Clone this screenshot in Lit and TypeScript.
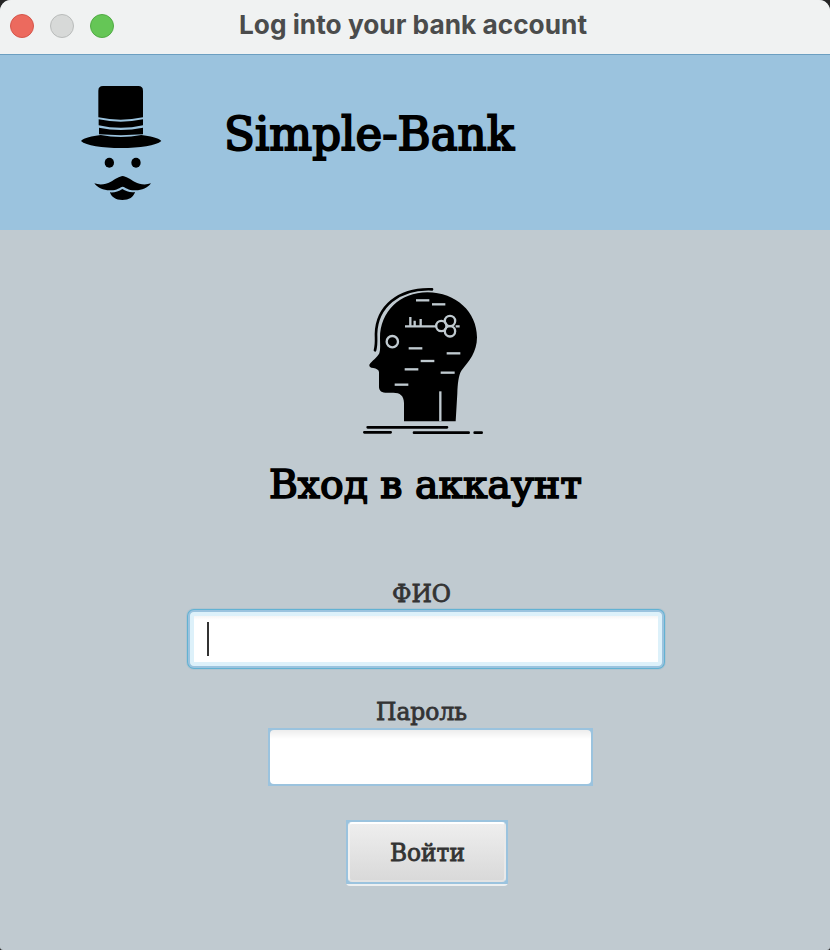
import { LitElement, html, css, svg } from "lit";
import { customElement } from "lit/decorators.js";

/** A single line of text fitted to a given width. */
const line = (text: string, cls: string, width: number, height: number, baseline: number) => html`
  <svg class="line ${cls}" width=${width} height=${height} viewBox="0 0 ${width} ${height}">
    <text x="0" y=${baseline} textLength=${width} lengthAdjust="spacingAndGlyphs">${text}</text>
  </svg>`;

const gentleman = html`
  <svg class="logo" width="120" height="140" viewBox="0 0 360 420">
    <path d="M115 62Q115 48 129 48H235Q249 48 249 62V142Q182 156 115 142Z" />
    <path d="M116 148Q182 162 249 148V166Q182 181 116 166Z" />
    <path d="M117 173Q182 187 249 173V193Q182 198 117 193Z" />
    <path d="M63 213C72 203 96 199 122 195Q182 207 244 195C270 199 295 203 304 213C288 227 240 234 183 234S78 227 63 213Z" />
    <ellipse cx="148" cy="278" rx="14" ry="15" />
    <ellipse cx="228" cy="278" rx="14" ry="15" />
    <path d="M103 340C120 346 138 343 151 336C167 327 178 319 188 318C198 319 209 327 225 336C238 343 256 346 273 340C262 355 244 362 223 361C205 361 196 352 188 350C180 352 171 361 153 361C132 362 114 355 103 340Z" />
    <path d="M150 367C164 368 176 364 187 357C198 364 210 368 225 366C221 381 207 390 187 390S154 381 150 367Z" />
  </svg>`;

const dashes = [
  [198, 76, 238], [246, 88, 286], [176, 220, 217], [290, 235, 331], [212, 258, 253],
  [164, 283, 205], [272, 293, 314], [134, 329, 175],
];

const head = html`
  <svg class="head" width="150" height="170" viewBox="0 0 450 510">
    <path d="M162 439V384C162 362 150 353 130 353H106C91 353 86 344 87 330V292C87 284 79 281 70 279C61 278 57 274 58 269C65 259 82 247 88 235C92 222 90 207 90 190C90 110 150 52 232 52C319 52 381 112 381 187C381 231 357 259 335 286C325 300 323 330 322 355L317 439Z" />
    <path class="outline" d="M75 226C80 207 78 192 78 177C80 96 145 39 246 43" />
    <g class="detail">
      ${dashes.map(([x1, y, x2]) => svg`<path d="M${x1} ${y}H${x2}" />`)}
      <circle cx="127" cy="200" r="17" />
      <path d="M165 154H258M317 154H329M181 152V126M194 152V137M212 152V132" />
      <circle cx="274" cy="153" r="15.5" />
      <circle cx="300" cy="138" r="15.5" />
      <circle cx="300" cy="169" r="15.5" />
      <path d="M271 349V439" />
    </g>
    <path class="ground" d="M53 457H291M43 472H122M192 473H356M374 473H395" />
  </svg>`;

@customElement("app-root")
export class AppRoot extends LitElement {
  static styles = css`
    :host { display: block; background: #252525; }
    .window {
      width: 830px; height: 950px; box-sizing: border-box; overflow: hidden;
      border-radius: 11px 11px 3px 3px; background: #c0cad0;
      display: flex; flex-direction: column;
    }
    svg { display: block; flex: none; }
    .line { overflow: visible; font-family: "DejaVu Serif", serif; fill: #333; }
    .titlebar {
      height: 55px; box-sizing: border-box; flex: none; background: #f0f2f2;
      border-bottom: 1px solid #6c9fc1; display: flex; padding-left: 10px;
    }
    .lights { display: flex; gap: 16px; padding-top: 14px; width: 228.5px; }
    .light { width: 24px; height: 24px; box-sizing: border-box; border-radius: 50%; border: 1px solid; }
    .close { background: #ec6a5e; border-color: #d5564b; }
    .minimize { background: #d7d9d8; border-color: #b9bcbb; }
    .zoom { background: #65c656; border-color: #51ab45; }
    .title { font: bold 26px Inter, sans-serif; fill: #4b4c4c; }
    .banner { height: 175px; flex: none; background: #9bc3de; display: flex; }
    .logo { margin: 15px 44px 0 60px; }
    .brand { font-size: 47px; fill: #000; stroke: #000; stroke-width: 2px; }
    .login { display: flex; flex-direction: column; align-items: flex-start; padding-top: 45px; }
    .head { margin-left: 350px; }
    .outline { fill: none; stroke: #000; stroke-width: 8; stroke-linecap: round; }
    .ground { fill: none; stroke: #000; stroke-width: 8; stroke-linecap: round; }
    .detail { fill: none; stroke: #c0cad0; stroke-width: 7; }
    .heading { font-size: 40px; fill: #000; stroke: #000; stroke-width: 1.7px; margin: 10px 0 0 269px; }
    .small { font-size: 23.5px; stroke: #333; stroke-width: .8px; }
    .name-label { margin: 55px 0 0 392px; }
    .name-field {
      width: 472px; height: 54px; box-sizing: border-box; margin: 2px 0 0 190px;
      border: 4px solid #ddf1fa; border-radius: 4px; padding: 6px 13px;
      background: linear-gradient(#f5f5f5, #fff 4px);
      box-shadow: 0 0 0 2px #9bc3de, 0 0 0 3px #62b2d3, 0 0 0 4px #b0c4cf;
    }
    .caret { width: 2px; height: 34px; background: #333; }
    .password-label { margin: 32px 0 0 375.5px; }
    .password-field {
      width: 325px; height: 58px; box-sizing: border-box; margin: 0 0 0 268px;
      padding: 2px; background: #9bc3de;
    }
    .password-inner { height: 54px; border-radius: 4px; background: linear-gradient(#ededed, #fff 9px); }
    .submit {
      width: 162px; height: 66px; box-sizing: border-box; margin: 34px 0 0 346px; padding: 0 0 2px;
      background: linear-gradient(#9bc3de 64px, #edf0f1 64px); border: 0; border-radius: 0 0 4px 4px;
      display: block;
    }
    .face {
      height: 60px; box-sizing: border-box; border-radius: 4px; margin: 0 2px;
      border: 2px solid; border-color: #fff #e9e9e9 #e3e3e3 #f1f1f1;
      padding: 12px 0 0 39.5px; background: linear-gradient(#eee, #d9d9d9);
    }
  `;

  render() {
    return html`
      <div class="window">
        <header class="titlebar">
          <div class="lights">
            <span class="light close"></span>
            <span class="light minimize"></span>
            <span class="light zoom"></span>
          </div>
          ${line("Log into your bank account", "title", 348, 54, 34)}
        </header>
        <div class="banner">
          ${gentleman}
          ${line("Simple-Bank", "brand", 290, 175, 95)}
        </div>
        <main class="login">
          ${head}
          ${line("Вход в аккаунт", "heading", 313, 70, 43)}
          ${line("ФИО", "small name-label", 59, 30, 22)}
          <div class="name-field"><div class="caret"></div></div>
          ${line("Пароль", "small password-label", 91, 30, 22)}
          <div class="password-field"><div class="password-inner"></div></div>
          <button class="submit">
            <div class="face">${line("Войти", "small", 75, 36, 25)}</div>
          </button>
        </main>
      </div>
    `;
  }
}
